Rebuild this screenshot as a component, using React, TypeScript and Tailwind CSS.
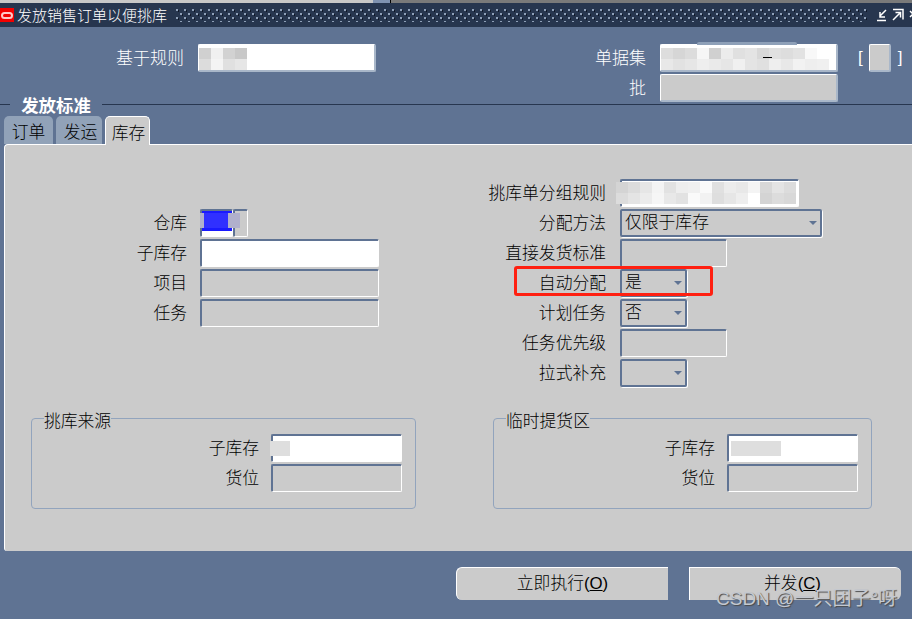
import type { ReactNode } from 'react';

const FONT = 'font-["Liberation_Sans","Noto_Sans_CJK_SC",sans-serif]';

// etched field: dark on top/left, light on bottom/right
function Field({ className = '', children }: { className?: string; children?: ReactNode }) {
  return (
    <div
      className={`relative h-[28px] shrink-0 rounded-[2px] border-t-2 border-l-2 border-r border-b border-t-[#5f7393] border-l-[#5f7393] border-r-white border-b-white ${className}`}
    >
      {children}
    </div>
  );
}

// raised field on the blue background
function TopField({ className = '', children }: { className?: string; children?: ReactNode }) {
  return (
    <div
      className={`relative h-[28px] shrink-0 rounded-[2px] border-t border-l border-r-2 border-b-2 border-t-white border-l-white border-r-[#a9b7c9] border-b-[#a9b7c9] ${className}`}
    >
      {children}
    </div>
  );
}

function Select({ value, width }: { value?: string; width: string }) {
  return (
    <div
      className={`relative h-[28px] shrink-0 rounded-[2px] border-2 border-[#5f7393] shadow-[1px_1px_0_white] flex items-center pl-[3px] text-[16.8px] font-light text-black ${width}`}
    >
      <span className="pt-[1px] leading-none">{value}</span>
      <span className="ml-auto mr-[3px] w-0 h-0 border-x-[4px] border-x-transparent border-t-[4px] border-t-[#5f7393]" />
    </div>
  );
}

function Label({ children, className = '' }: { children: ReactNode; className?: string }) {
  return <div className={`pt-[3px] text-right text-[16.8px] leading-none font-light text-black ${className}`}>{children}</div>;
}

function TopLabel({ children, className = '' }: { children: ReactNode; className?: string }) {
  return <div className={`h-[28px] pt-[2px] flex items-center justify-end text-[17px] font-light text-white ${className}`}>{children}</div>;
}

function Row({ children }: { children: ReactNode }) {
  return <div className="flex items-center h-[30px]">{children}</div>;
}

function Blots({ rows, className = '' }: { rows: string[][]; className?: string }) {
  return (
    <div className={`absolute flex flex-col ${className}`}>
      {rows.map((row, i) => (
        <div key={i} className="flex h-[11px]">
          {row.map((cls, j) => (
            <div key={j} className={`w-[12px] ${cls}`} />
          ))}
        </div>
      ))}
    </div>
  );
}

function GroupBox({ title, className, labelWidth, blot }: {
  title: string;
  className: string;
  labelWidth: string;
  blot: ReactNode;
}) {
  return (
    <div className={`relative h-[91px] rounded-[4px] border border-[#92a4bd] pt-[14px] ${className}`}>
      <div className="absolute left-[12px] top-[-6px] bg-[#cbcbcb] text-[16.8px] leading-[17px] font-light text-black">{title}</div>
      <Row>
        <Label className={labelWidth}>子库存</Label>
        <Field className="w-[131px] ml-[12px] bg-white">{blot}</Field>
      </Row>
      <Row>
        <Label className={labelWidth}>货位</Label>
        <Field className="w-[131px] ml-[12px]" />
      </Row>
    </div>
  );
}

function Tab({ label, active = false, className = '' }: { label: string; active?: boolean; className?: string }) {
  return (
    <div
      className={`rounded-t-[5px] pt-[6px] flex items-center justify-center text-[16.8px] font-light text-black ${
        active ? 'bg-[#cbcbcb] border-t border-x border-white h-[29px] -mb-px relative z-10' : 'h-[28px] bg-[#91a2b8]'
      } ${className}`}
    >
      {label}
    </div>
  );
}

export default function App() {
  return (
    <div className={`relative w-[912px] h-[619px] overflow-hidden bg-[#5f7393] ${FONT}`}>
      <div className="h-[3px] bg-[#c8c8c8] flex">
        <div className="ml-[373px] w-[17px] bg-[#7f92b0]" />
        <div className="w-px bg-black" />
        <div className="flex-1 bg-[#7a7a7a]" />
      </div>

      {/* title bar */}
      <div className="h-[24px] bg-[#27364f] flex items-center">
        <div className="w-[14px] h-[14px] shrink-0 bg-[#f20000] flex items-center justify-center">
          <div className="w-[12px] h-[7px] rounded-full border-2 border-[#ffc8c8]" />
        </div>
        <span className="ml-[3px] shrink-0 whitespace-nowrap text-[15px] leading-none font-light text-white">发放销售订单以便挑库</span>
        <svg className="ml-[9px] shrink-0" width="692" height="13">
          <defs>
            <pattern id="grip" width="8" height="8" patternUnits="userSpaceOnUse">
              <rect x="0" y="0" width="2" height="2" fill="#8fa0b8" />
              <rect x="2" y="1" width="1" height="2" fill="#101828" />
              <rect x="4" y="4" width="2" height="2" fill="#8fa0b8" />
              <rect x="6" y="5" width="1" height="2" fill="#101828" />
            </pattern>
          </defs>
          <rect width="692" height="13" fill="url(#grip)" />
        </svg>
        <svg className="ml-[9px] shrink-0" width="36" height="14" viewBox="0 0 36 14" fill="none" stroke="white" strokeWidth="1.5">
          <path d="M0 12.5h9M9 2L3 8M3 4v5h5" />
          <path d="M16 1.5h10v10M16 12l7-7M18.5 4.5h5v5" />
          <path d="M33 3l6 6M39 3l-6 6" />
        </svg>
      </div>

      {/* header fields */}
      <div className="h-[77px] pt-[17px] flex">
        <div className="flex items-start">
          <TopLabel className="w-[184px]">基于规则</TopLabel>
          <TopField className="ml-[14px] w-[178px] bg-white">
            <Blots
              className="left-0 top-[3px]"
              rows={[
                ['bg-[#d0d0d0]', 'bg-[#f0f0f0]', 'bg-[#d2d2d2]', 'bg-[#c8c8c8]'],
                ['bg-[#dcdcdc]', 'bg-[#f4f4f4]', 'bg-[#e0e0e0]', 'bg-[#e6e6e6]'],
              ]}
            />
          </TopField>
        </div>
        <div className="flex flex-col gap-[2px]">
          <div className="flex items-start">
            <TopLabel className="w-[270px]">单据集</TopLabel>
            <TopField className="ml-[14px] w-[178px] bg-white">
              <div className="absolute left-[36px] -top-[3px] w-[100px] h-[3px] rounded-t-[2px] bg-[#8ea0b8]" />
              <Blots
                className="left-0 top-[3px]"
                rows={[
                  ['bg-[#dddddd]', 'bg-[#d6d6d6]', 'bg-[#dcdcdc]', 'bg-[#f6f6f6]', 'bg-[#d0d0d0]', 'bg-[#ececec]', 'bg-[#e0e0e0]', 'bg-[#e4e4e4]', 'bg-[#d8d8d8]', 'bg-[#e0e0e0]', 'bg-[#dddddd]', 'bg-[#e2e2e2]', 'bg-[#f8f8f8]'],
                  ['bg-[#e8e8e8]', 'bg-[#e2e2e2]', 'bg-[#e6e6e6]', 'bg-[#eeeeee]', 'bg-[#eaeaea]', 'bg-[#e6e6e6]', 'bg-[#f0f0f0]', 'bg-[#e4e4e4]', 'bg-[#e0e0e0]', 'bg-[#eeeeee]', 'bg-[#e8e8e8]', 'bg-[#f2f2f2]', 'bg-[#eeeeee]', 'bg-[#f0f0f0]'],
                ]}
              />
              <div className="absolute left-[102px] top-[12px] w-[9px] h-px bg-black" />
            </TopField>
            <span className="ml-[20px] text-[17px] leading-[28px] font-light text-white">[</span>
            <TopField className="ml-[6px] w-[22px] bg-[#cbcbcb]" />
            <span className="ml-[7px] text-[17px] leading-[28px] font-light text-white">]</span>
          </div>
          <div className="flex items-start">
            <TopLabel className="w-[270px]">批</TopLabel>
            <TopField className="ml-[14px] w-[178px] bg-[#cbcbcb]" />
          </div>
        </div>
      </div>

      {/* section rule with title */}
      <div className="flex items-center h-[0px]">
        <div className="w-[10px] h-px bg-[#27364f]" />
        <span className="w-[92px] pt-[5px] text-center text-[17.4px] leading-none font-bold text-white">发放标准</span>
        <div className="flex-1 h-px bg-[#27364f]" />
      </div>

      {/* tabs */}
      <div className="mt-[12px] pl-[4px] flex gap-[3px] items-end h-[28px]">
        <Tab label="订单" className="w-[49px]" />
        <Tab label="发运" className="w-[46px] pl-[3px]" />
        <Tab label="库存" active className="w-[45px] pl-[2px]" />
      </div>

      {/* panel */}
      <div className="ml-[4px] h-[407px] bg-[#cbcbcb] rounded-tl-[4px] rounded-bl-[3px] border-t border-l border-white pt-[33px]">
        <div className="flex h-[210px]">
          <div className="w-[375px] pt-[30px]">
            <Row>
              <Label className="w-[182px]">仓库</Label>
              <Field className="ml-[13px] w-[33px] bg-white">
                <div className="absolute left-0 top-0 w-[30px] h-[20px] bg-[#1a1aff]" />
              </Field>
              <Field className="w-[15px]" />
              {/* smudge lying over the value */}
              <div className="absolute left-[200px] top-[213px] w-[40px] h-[15px] bg-[#b0b0cc]" />
              <div className="absolute left-[204px] top-[213px] w-[24px] h-[15px] bg-[#3030ff]" />
            </Row>
            <Row>
              <Label className="w-[182px]">子库存</Label>
              <Field className="ml-[13px] w-[179px] bg-white" />
            </Row>
            <Row>
              <Label className="w-[182px]">项目</Label>
              <Field className="ml-[13px] w-[179px]" />
            </Row>
            <Row>
              <Label className="w-[182px]">任务</Label>
              <Field className="ml-[13px] w-[179px]" />
            </Row>
          </div>
          <div>
            <Row>
              <Label className="w-[226px]">挑库单分组规则</Label>
              <Field className="ml-[14px] w-[179px] bg-white">
                <Blots
                  className="-left-[6px] top-[1px]"
                  rows={[
                    ['bg-[#d4d4d4]', 'bg-[#dcdcdc]', 'bg-[#e6e6e6]', 'bg-[#f4f4f4]', 'bg-[#e2e2e2]', 'bg-[#eeeeee]', 'bg-[#f0f0f0]', 'bg-[#fafafa]', 'bg-[#e0e0e0]', 'bg-[#ececec]', 'bg-[#e8e8e8]', 'bg-[#f4f4f4]', 'bg-[#d8d8d8]', 'bg-[#e4e4e4]', 'bg-[#dcdcdc]'],
                    ['bg-[#dcdcdc]', 'bg-[#e4e4e4]', 'bg-[#ececec]', 'bg-[#f6f6f6]', 'bg-[#e8e8e8]', 'bg-[#e2e2e2]', 'bg-[#fafafa]', 'bg-[#f2f2f2]', 'bg-[#dedede]', 'bg-[#e6e6e6]', 'bg-[#eeeeee]', 'bg-[#ffffff]', 'bg-[#d4d4d4]', 'bg-[#dcdcdc]', 'bg-[#d8d8d8]'],
                  ]}
                />
              </Field>
            </Row>
            <Row>
              <Label className="w-[226px]">分配方法</Label>
              <div className="ml-[14px]">
                <Select value="仅限于库存" width="w-[202px]" />
              </div>
            </Row>
            <Row>
              <Label className="w-[226px]">直接发货标准</Label>
              <Field className="ml-[14px] w-[107px]" />
            </Row>
            <Row>
              <Label className="w-[226px]">自动分配</Label>
              <div className="ml-[14px]">
                <Select value="是" width="w-[67px]" />
              </div>
            </Row>
            <Row>
              <Label className="w-[226px]">计划任务</Label>
              <div className="ml-[14px]">
                <Select value="否" width="w-[67px]" />
              </div>
            </Row>
            <Row>
              <Label className="w-[226px]">任务优先级</Label>
              <Field className="ml-[14px] w-[107px]" />
            </Row>
            <Row>
              <Label className="w-[226px]">拉式补充</Label>
              <div className="ml-[14px]">
                <Select width="w-[67px]" />
              </div>
            </Row>
          </div>
        </div>

        <div className="mt-[30px] pl-[26px] flex">
          <GroupBox
            title="挑库来源"
            className="w-[385px]"
            labelWidth="w-[227px]"
            blot={<div className="absolute -left-[3px] top-[5px] w-[20px] h-[15px] bg-[#dedede]" />}
          />
          <GroupBox
            title="临时提货区"
            className="ml-[77px] w-[379px]"
            labelWidth="w-[221px]"
            blot={<div className="absolute left-[2px] top-[5px] w-[50px] h-[15px] bg-[#dedede]" />}
          />
        </div>
      </div>

      {/* buttons */}
      <div className="mt-[16px] flex pl-[456px] gap-[21px]">
        <button className="w-[212px] h-[33px] rounded-l-[6px] bg-[#cbcbcb] border-t border-l border-white text-[16.8px] font-light text-black">
          立即执行(<span className="underline">O</span>)
        </button>
        <button className="w-[212px] h-[33px] pr-[6px] rounded-r-[6px] bg-[#cbcbcb] border-t border-l border-white text-[16.8px] font-light text-black">
          并发(<span className="underline">C</span>)
        </button>
      </div>

      {/* red annotation over the form */}
      <div className="absolute left-[514px] top-[266px] w-[199px] h-[30px] rounded-[3px] border-[3px] border-[#ff2011]" />

      {/* watermark */}
      <div className="absolute left-[716px] top-[587px] whitespace-nowrap text-[19px] leading-[24px] text-[#c4c8cf] [text-shadow:1px_1px_1px_#4a4a4a]">
        CSDN @一只团子°呀
      </div>
    </div>
  );
}
